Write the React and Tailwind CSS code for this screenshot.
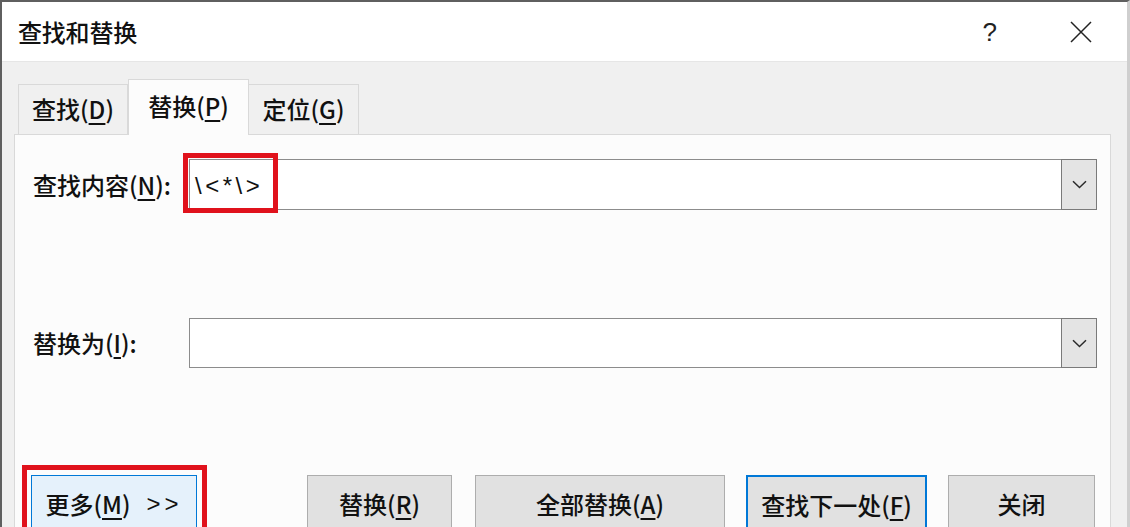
import React from "react";

const F = "font-['Noto_Sans_CJK_SC','Microsoft_YaHei',sans-serif]";

function U({ children }) {
  return <span className="underline decoration-[1.5px] underline-offset-[4px]">{children}</span>;
}

function Chevron() {
  return (
    <svg width="15" height="9" viewBox="0 0 15 9" fill="none">
      <path d="M1 1.2L7.5 7.5L14 1.2" stroke="#2a2a2a" strokeWidth="1.5" />
    </svg>
  );
}

function Combo({ children, h = "h-[51px]" }) {
  return (
    <div className={`relative flex-1 ${h} bg-white border border-[#8c8c8c] flex items-center`}>
      <div className="flex-1 pl-[5px] text-[24px] leading-none">{children}</div>
      <div className="w-[34px] h-full bg-[#e4e4e4] border border-[#7a7a7a] -mr-px -my-px box-content flex items-center justify-center">
        <Chevron />
      </div>
    </div>
  );
}

function Btn({ children, className = "" }) {
  return (
    <div
      className={`h-[64px] flex items-start justify-center pt-[12px] text-[24px] leading-[32px] text-[#111] ${className}`}
    >
      {children}
    </div>
  );
}

export default function App() {
  return (
    <div
      className={`${F} font-medium w-[1130px] h-[527px] overflow-hidden bg-[#f0f0f0] border-t-2 border-l-2 border-r-[3px] border-t-[#5f5f5f] border-l-[#5f5f5f] border-r-[#cfcfcf] text-[#111] flex flex-col`}
    >
      {/* title bar */}
      <div className="h-[60px] shrink-0 bg-white flex items-center pl-[16px] border-b border-[#e6e6e6]">
        <div className="text-[24px] leading-none tracking-[-0.2px]">查找和替换</div>
        <div className="flex-1" />
        <div className="font-['Liberation_Sans',sans-serif] font-normal text-[26px] leading-none text-[#222] mr-[73px] mt-[1px]">?</div>
        <svg width="22" height="22" viewBox="0 0 22 22" className="mr-[35px]">
          <path d="M1 1L21 21M21 1L1 21" stroke="#222" strokeWidth="1.5" />
        </svg>
      </div>

      {/* tabs */}
      <div className="h-[72px] shrink-0 flex items-end pl-[16px]">
        <div className="w-[110px] h-[50px] border border-b-0 border-[#d9d9d9] bg-[#f0f0f0] flex items-center justify-center text-[24px] leading-none pb-[2px]">
          查找(<U>D</U>)
        </div>
        <div className="relative z-10 -mb-px w-[121px] h-[56px] border border-b-0 border-[#d9d9d9] bg-[#fcfcfc] flex items-center justify-center text-[24px] leading-none pb-[4px]">
          替换(<U>P</U>)
        </div>
        <div className="w-[110px] h-[50px] border border-b-0 border-l-0 border-[#d9d9d9] bg-[#f0f0f0] flex items-center justify-center text-[24px] leading-none pb-[2px]">
          定位(<U>G</U>)
        </div>
      </div>

      {/* panel */}
      <div className="ml-[12px] w-[1097px] flex-1 bg-[#fcfcfc] border border-[#d9d9d9] border-b-0 pt-[24px] pr-[13px]">
        {/* find row */}
        <div className="flex items-center">
          <div className="w-[174px] pl-[18px] text-[24px] leading-none shrink-0">
            查找内容(<U>N</U>):
          </div>
          <div className="relative flex-1 flex">
            <Combo>
              <span className="font-['Liberation_Sans',sans-serif] font-normal tracking-[3.5px] text-[#111]">\&lt;*\&gt;</span>
            </Combo>
            <div className="absolute left-[-6px] top-[-6px] w-[95px] h-[60px] border-[5px] border-[#e0121c] pointer-events-none" />
          </div>
        </div>

        {/* replace row */}
        <div className="flex items-center mt-[108px]">
          <div className="w-[174px] pl-[18px] text-[24px] leading-none shrink-0">
            替换为(<U>I</U>):
          </div>
          <Combo h="h-[50px]" />
        </div>

        {/* buttons */}
        <div className="flex mt-[107px] pl-[16px]">
          <div className="relative w-[166px]">
            <Btn className="bg-[#e5f1fb] border border-[#0078d7]">
              更多(<U>M</U>)<span className="ml-[16px] font-['Liberation_Sans',sans-serif] font-normal tracking-[4px]">&gt;&gt;</span>
            </Btn>
            <div className="absolute left-[-9px] right-[-10px] top-[-10px] h-[80px] border-[5px] border-[#e0121c] pointer-events-none" />
          </div>
          <Btn className="ml-[110px] w-[145px] bg-[#e1e1e1] border border-[#adadad]">
            替换(<U>R</U>)
          </Btn>
          <Btn className="ml-[23px] w-[250px] bg-[#e1e1e1] border border-[#adadad]">
            全部替换(<U>A</U>)
          </Btn>
          <Btn className="ml-[21px] w-[181px] bg-[#e1e1e1] border-2 border-[#0078d7] pt-[11px]">
            查找下一处(<U>F</U>)
          </Btn>
          <Btn className="ml-[21px] w-[147px] bg-[#e1e1e1] border border-[#adadad]">
            关闭
          </Btn>
        </div>
      </div>
    </div>
  );
}
